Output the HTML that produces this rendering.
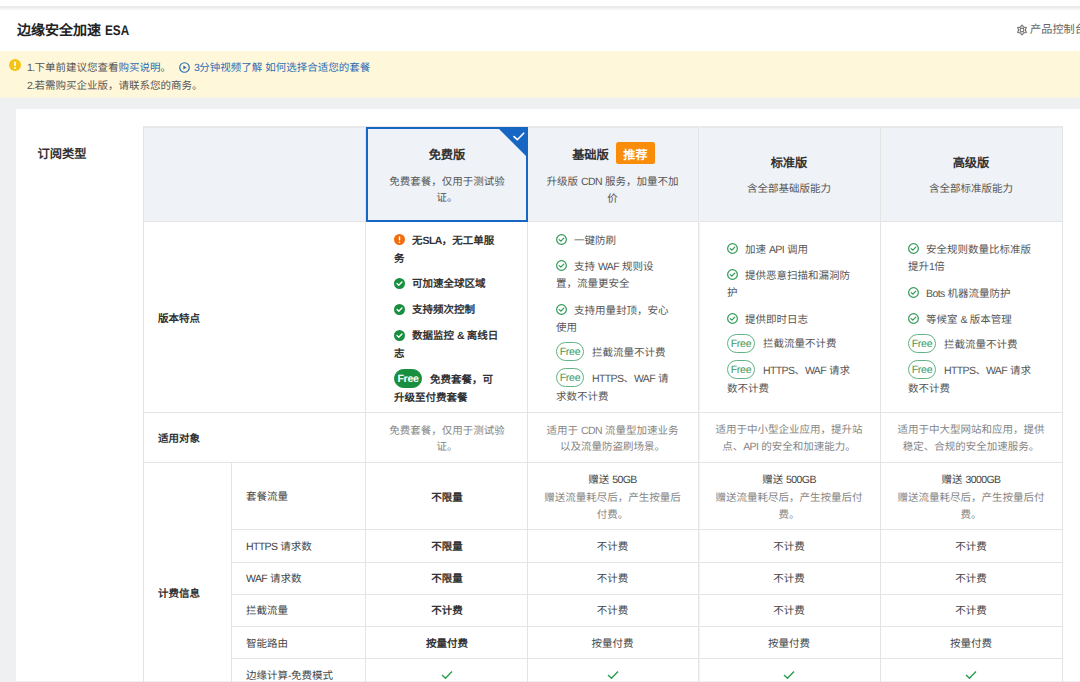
<!DOCTYPE html>
<html lang="zh-CN"><head><meta charset="utf-8"><style>
html,body{margin:0;padding:0;}
body{width:1080px;height:682px;overflow:hidden;position:relative;background:#fff;font-family:"Liberation Sans",sans-serif;text-rendering:geometricPrecision;}
.t{position:absolute;white-space:nowrap;}
.la{letter-spacing:-0.6px;}
.r{position:absolute;box-sizing:content-box;}
.free{box-sizing:border-box;width:28px;height:19px;border-radius:9.5px;font-size:10.6px;line-height:17px;padding-top:1.3px;text-align:center;letter-spacing:-0.3px;}
.ff{background:#178f3f;color:#fff;font-weight:700;border:1px solid #178f3f;}
.fo{background:#fff;color:#3f9a5e;border:1px solid #62b283;}
.badge{box-sizing:border-box;width:39px;height:21.5px;padding-top:4.6px;border-radius:2.5px;background:#fa8c0c;color:#fff;font-weight:700;font-size:12px;line-height:17px;text-align:center;letter-spacing:0.3px;}
</style></head><body>
<div class="r" style="left:0px;top:6px;width:1080px;height:5px;background:linear-gradient(#ebebeb,#ebebeb 35%,#f6f6f6 60%,#fdfdfd);"></div>
<div class="t" style="left:17.00px;top:19.50px;font-size:14px;line-height:20px;font-weight:700;color:#222;letter-spacing:0;">边缘安全加速 <span style="display:inline-block;transform:scaleX(0.84);transform-origin:0 50%;font-weight:600">ESA</span></div>
<svg class="t" style="left:1016px;top:24px" width="12" height="12" viewBox="0 0 12 12"><g fill="none" stroke="#707070" stroke-width="1.1" stroke-linejoin="round"><path d="M6.00 1.00 L7.68 3.10 L10.33 3.50 L9.35 6.00 L10.33 8.50 L7.68 8.90 L6.00 11.00 L4.33 8.90 L1.67 8.50 L2.65 6.00 L1.67 3.50 L4.32 3.10 Z"/><circle cx="6" cy="6" r="1.9"/></g></svg>
<div class="t" style="left:1030.00px;top:21.50px;font-size:11.2px;line-height:17px;font-weight:400;color:#666;letter-spacing:0px;">产品控制台</div>
<div class="r" style="left:0px;top:51px;width:1080px;height:47px;background:#fff7da;"></div>
<div class="r" style="left:0px;top:98px;width:1080px;height:584px;background:#eff0f1;"></div>
<div class="r" style="left:0px;top:97px;width:1080px;height:1px;background:#f7f4e6;"></div>
<div class="r" style="left:16px;top:109px;width:1064px;height:572px;background:#ffffff;"></div>
<svg class="t" style="left:9px;top:58.50px" width="12" height="12" viewBox="0 0 12 12"><circle cx="6" cy="6" r="6" fill="#f5c316"/><rect x="5.2" y="2.4" width="1.6" height="4.8" rx="0.8" fill="#fff"/><circle cx="6" cy="9" r="0.9" fill="#fff"/></svg>
<div class="t" style="left:27.00px;top:60.00px;font-size:10.5px;line-height:17px;font-weight:400;color:#555;letter-spacing:0px;"><span class="la" style="font-size:10.50px">1.</span>下单前建议您查看<span style="color:#2b6cb6">购买说明</span>。</div>
<svg class="t" style="left:179px;top:61.5px" width="11" height="11" viewBox="0 0 12 12"><circle cx="6" cy="6" r="5.2" fill="none" stroke="#2b6cb6" stroke-width="1.3"/><path d="M4.7 3.7 L8.4 6 L4.7 8.3 Z" fill="#2b6cb6"/></svg>
<div class="t" style="left:194.00px;top:60.00px;font-size:10.5px;line-height:17px;font-weight:400;color:#2b6cb6;letter-spacing:0px;"><span class="la" style="font-size:10.50px">3</span>分钟视频了解 如何选择合适您的套餐</div>
<div class="t" style="left:27.00px;top:77.50px;font-size:10.5px;line-height:17px;font-weight:400;color:#555;letter-spacing:0px;"><span class="la" style="font-size:10.50px">2.</span>若需购买企业版，请联系您的商务。</div>
<div class="t" style="left:37.50px;top:144.70px;font-size:12.25px;line-height:18px;font-weight:700;color:#333;letter-spacing:0px;">订阅类型</div>
<div class="r" style="left:143px;top:126px;width:920px;height:95px;background:#eff2f7;"></div>
<div class="r" style="left:143px;top:126px;width:920px;height:1px;background:#e9e9e9;"></div>
<div class="r" style="left:143px;top:127px;width:920px;height:1px;background:#e6e8ec;"></div>
<div class="r" style="left:143px;top:221px;width:920px;height:1px;background:#e4e4e4;"></div>
<div class="r" style="left:143px;top:412px;width:920px;height:1px;background:#e4e4e4;"></div>
<div class="r" style="left:143px;top:462px;width:920px;height:1px;background:#e4e4e4;"></div>
<div class="r" style="left:231px;top:529px;width:832px;height:1px;background:#e4e4e4;"></div>
<div class="r" style="left:231px;top:562px;width:832px;height:1px;background:#e4e4e4;"></div>
<div class="r" style="left:231px;top:594px;width:832px;height:1px;background:#e4e4e4;"></div>
<div class="r" style="left:231px;top:626px;width:832px;height:1px;background:#e4e4e4;"></div>
<div class="r" style="left:231px;top:658px;width:832px;height:1px;background:#e4e4e4;"></div>
<div class="r" style="left:143px;top:126px;width:1px;height:556px;background:#e4e4e4;"></div>
<div class="r" style="left:1062px;top:126px;width:1px;height:556px;background:#e4e4e4;"></div>
<div class="r" style="left:365px;top:126px;width:1px;height:556px;background:#e4e4e4;"></div>
<div class="r" style="left:527px;top:126px;width:1px;height:556px;background:#e4e4e4;"></div>
<div class="r" style="left:698px;top:126px;width:1px;height:556px;background:#e4e4e4;"></div>
<div class="r" style="left:699px;top:126px;width:1px;height:556px;background:#f4f4f4;"></div>
<div class="r" style="left:880px;top:126px;width:1px;height:556px;background:#e4e4e4;"></div>
<div class="r" style="left:231px;top:462px;width:1px;height:220px;background:#e4e4e4;"></div>
<div class="r" style="left:366px;top:127px;width:158px;height:91px;border:2px solid #1766c4;"></div>
<svg class="t" style="left:497px;top:127px" width="31" height="31" viewBox="0 0 31 31"><path d="M0 0 L31 0 L31 31 Z" fill="#1766c4"/><path d="M17 9.6 L20.3 12.7 L26.7 6.2" stroke="#fff" stroke-width="1.6" fill="none" stroke-linecap="round" stroke-linejoin="round"/></svg>
<div class="t" style="left:297.00px;top:147.00px;width:300px;text-align:center;font-size:12.25px;line-height:17px;font-weight:700;color:#333;letter-spacing:0px;">免费版</div>
<div class="t" style="left:297.00px;top:174.00px;width:300px;text-align:center;font-size:10.5px;line-height:17px;font-weight:400;color:#555;letter-spacing:0px;">免费套餐，仅用于测试验</div>
<div class="t" style="left:297.00px;top:189.50px;width:300px;text-align:center;font-size:10.5px;line-height:17px;font-weight:400;color:#555;letter-spacing:0px;">证。</div>
<div class="t" style="left:550.50px;top:147.00px;width:80px;text-align:center;font-size:12.25px;line-height:17px;font-weight:700;color:#333;letter-spacing:0px;">基础版</div>
<div class="t badge" style="left:616px;top:142.3px">推荐</div>
<div class="t" style="left:462.50px;top:173.80px;width:300px;text-align:center;font-size:10.5px;line-height:17px;font-weight:400;color:#555;letter-spacing:0px;">升级版 <span class="la" style="font-size:10.50px">CDN</span> 服务，加量不加</div>
<div class="t" style="left:462.50px;top:190.50px;width:300px;text-align:center;font-size:10.5px;line-height:17px;font-weight:400;color:#555;letter-spacing:0px;">价</div>
<div class="t" style="left:639.00px;top:155.30px;width:300px;text-align:center;font-size:12.25px;line-height:17px;font-weight:700;color:#333;letter-spacing:0px;">标准版</div>
<div class="t" style="left:639.00px;top:181.10px;width:300px;text-align:center;font-size:10.5px;line-height:17px;font-weight:400;color:#555;letter-spacing:0px;">含全部基础版能力</div>
<div class="t" style="left:821.00px;top:155.00px;width:300px;text-align:center;font-size:12.25px;line-height:17px;font-weight:700;color:#333;letter-spacing:0px;">高级版</div>
<div class="t" style="left:821.00px;top:181.10px;width:300px;text-align:center;font-size:10.5px;line-height:17px;font-weight:400;color:#555;letter-spacing:0px;">含全部标准版能力</div>
<div class="t" style="left:158.00px;top:310.50px;font-size:10.5px;line-height:17px;font-weight:700;color:#333;letter-spacing:0px;">版本特点</div>
<div class="t" style="left:158.00px;top:430.50px;font-size:10.5px;line-height:17px;font-weight:700;color:#333;letter-spacing:0px;">适用对象</div>
<div class="t" style="left:158.00px;top:585.50px;font-size:10.5px;line-height:17px;font-weight:700;color:#333;letter-spacing:0px;">计费信息</div>
<div class="t" style="left:246.00px;top:488.50px;font-size:10.5px;line-height:17px;font-weight:400;color:#444;letter-spacing:0px;">套餐流量</div>
<div class="t" style="left:246.00px;top:538.50px;font-size:10.5px;line-height:17px;font-weight:400;color:#444;letter-spacing:0px;"><span class="la" style="font-size:10.50px">HTTPS</span> 请求数</div>
<div class="t" style="left:246.00px;top:570.50px;font-size:10.5px;line-height:17px;font-weight:400;color:#444;letter-spacing:0px;"><span class="la" style="font-size:10.50px">WAF</span> 请求数</div>
<div class="t" style="left:246.00px;top:602.50px;font-size:10.5px;line-height:17px;font-weight:400;color:#444;letter-spacing:0px;">拦截流量</div>
<div class="t" style="left:246.00px;top:635.50px;font-size:10.5px;line-height:17px;font-weight:400;color:#444;letter-spacing:0px;">智能路由</div>
<div class="t" style="left:246.00px;top:667.50px;font-size:10.5px;line-height:17px;font-weight:400;color:#444;letter-spacing:0px;">边缘计算<span class="la" style="font-size:10.50px">-</span>免费模式</div>
<svg class="t" style="left:394px;top:233.80px" width="11" height="11" viewBox="0 0 12 12"><circle cx="6" cy="6" r="6" fill="#f26d0f"/><rect x="5.2" y="2.4" width="1.6" height="4.8" rx="0.8" fill="#fff"/><circle cx="6" cy="9" r="0.9" fill="#fff"/></svg>
<div class="t" style="left:412.00px;top:233.00px;font-size:10.5px;line-height:17px;font-weight:700;color:#333;letter-spacing:0px;">无<span class="la" style="font-size:10.50px">SLA</span>，无工单服</div>
<div class="t" style="left:394.00px;top:251.00px;font-size:10.5px;line-height:17px;font-weight:700;color:#333;letter-spacing:0px;">务</div>
<svg class="t" style="left:394px;top:278.00px" width="11" height="11" viewBox="0 0 12 12"><circle cx="6" cy="6" r="6" fill="#178f3f"/><path d="M3.3 6.1 L5.2 7.9 L8.7 4.3" stroke="#fff" stroke-width="1.5" fill="none" stroke-linecap="round" stroke-linejoin="round"/></svg>
<div class="t" style="left:412.00px;top:276.00px;font-size:10.5px;line-height:17px;font-weight:700;color:#333;letter-spacing:0px;">可加速全球区域</div>
<svg class="t" style="left:394px;top:303.50px" width="11" height="11" viewBox="0 0 12 12"><circle cx="6" cy="6" r="6" fill="#178f3f"/><path d="M3.3 6.1 L5.2 7.9 L8.7 4.3" stroke="#fff" stroke-width="1.5" fill="none" stroke-linecap="round" stroke-linejoin="round"/></svg>
<div class="t" style="left:412.00px;top:301.50px;font-size:10.5px;line-height:17px;font-weight:700;color:#333;letter-spacing:0px;">支持频次控制</div>
<svg class="t" style="left:394px;top:330.00px" width="11" height="11" viewBox="0 0 12 12"><circle cx="6" cy="6" r="6" fill="#178f3f"/><path d="M3.3 6.1 L5.2 7.9 L8.7 4.3" stroke="#fff" stroke-width="1.5" fill="none" stroke-linecap="round" stroke-linejoin="round"/></svg>
<div class="t" style="left:412.00px;top:328.00px;font-size:10.5px;line-height:17px;font-weight:700;color:#333;letter-spacing:0px;">数据监控 <span class="la" style="font-size:10.50px">&amp;</span> 离线日</div>
<div class="t" style="left:394.00px;top:346.30px;font-size:10.5px;line-height:17px;font-weight:700;color:#333;letter-spacing:0px;">志</div>
<div class="t free ff" style="left:394px;top:369.00px">Free</div>
<div class="t" style="left:430.00px;top:372.00px;font-size:10.5px;line-height:17px;font-weight:700;color:#333;letter-spacing:0px;">免费套餐，可</div>
<div class="t" style="left:394.00px;top:390.00px;font-size:10.5px;line-height:17px;font-weight:700;color:#333;letter-spacing:0px;">升级至付费套餐</div>
<svg class="t" style="left:556px;top:234.00px" width="11" height="11" viewBox="0 0 12 12"><circle cx="6" cy="6" r="5.3" fill="none" stroke="#2e9a56" stroke-width="1.3"/><path d="M3.5 6.1 L5.3 7.8 L8.5 4.5" stroke="#2e9a56" stroke-width="1.3" fill="none" stroke-linecap="round" stroke-linejoin="round"/></svg>
<div class="t" style="left:574.00px;top:233.20px;font-size:10.5px;line-height:17px;font-weight:400;color:#555;letter-spacing:0px;">一键防刷</div>
<svg class="t" style="left:556px;top:260.00px" width="11" height="11" viewBox="0 0 12 12"><circle cx="6" cy="6" r="5.3" fill="none" stroke="#2e9a56" stroke-width="1.3"/><path d="M3.5 6.1 L5.3 7.8 L8.5 4.5" stroke="#2e9a56" stroke-width="1.3" fill="none" stroke-linecap="round" stroke-linejoin="round"/></svg>
<div class="t" style="left:574.00px;top:258.70px;font-size:10.5px;line-height:17px;font-weight:400;color:#555;letter-spacing:0px;">支持 <span class="la" style="font-size:10.50px">WAF</span> 规则设</div>
<div class="t" style="left:556.00px;top:276.20px;font-size:10.5px;line-height:17px;font-weight:400;color:#555;letter-spacing:0px;">置，流量更安全</div>
<svg class="t" style="left:556px;top:304.00px" width="11" height="11" viewBox="0 0 12 12"><circle cx="6" cy="6" r="5.3" fill="none" stroke="#2e9a56" stroke-width="1.3"/><path d="M3.5 6.1 L5.3 7.8 L8.5 4.5" stroke="#2e9a56" stroke-width="1.3" fill="none" stroke-linecap="round" stroke-linejoin="round"/></svg>
<div class="t" style="left:574.00px;top:302.70px;font-size:10.5px;line-height:17px;font-weight:400;color:#555;letter-spacing:0px;">支持用量封顶，安心</div>
<div class="t" style="left:556.00px;top:320.20px;font-size:10.5px;line-height:17px;font-weight:400;color:#555;letter-spacing:0px;">使用</div>
<div class="t free fo" style="left:556px;top:342.00px">Free</div>
<div class="t" style="left:592.00px;top:344.70px;font-size:10.5px;line-height:17px;font-weight:400;color:#555;letter-spacing:0px;">拦截流量不计费</div>
<div class="t free fo" style="left:556px;top:368.00px">Free</div>
<div class="t" style="left:592.00px;top:370.70px;font-size:10.5px;line-height:17px;font-weight:400;color:#555;letter-spacing:0px;"><span class="la" style="font-size:10.50px">HTTPS</span>、<span class="la" style="font-size:10.50px">WAF</span> 请</div>
<div class="t" style="left:556.00px;top:389.20px;font-size:10.5px;line-height:17px;font-weight:400;color:#555;letter-spacing:0px;">求数不计费</div>
<svg class="t" style="left:727px;top:243.00px" width="11" height="11" viewBox="0 0 12 12"><circle cx="6" cy="6" r="5.3" fill="none" stroke="#2e9a56" stroke-width="1.3"/><path d="M3.5 6.1 L5.3 7.8 L8.5 4.5" stroke="#2e9a56" stroke-width="1.3" fill="none" stroke-linecap="round" stroke-linejoin="round"/></svg>
<div class="t" style="left:745.00px;top:241.70px;font-size:10.5px;line-height:17px;font-weight:400;color:#555;letter-spacing:0px;">加速 <span class="la" style="font-size:10.50px">API</span> 调用</div>
<svg class="t" style="left:727px;top:269.00px" width="11" height="11" viewBox="0 0 12 12"><circle cx="6" cy="6" r="5.3" fill="none" stroke="#2e9a56" stroke-width="1.3"/><path d="M3.5 6.1 L5.3 7.8 L8.5 4.5" stroke="#2e9a56" stroke-width="1.3" fill="none" stroke-linecap="round" stroke-linejoin="round"/></svg>
<div class="t" style="left:745.00px;top:267.70px;font-size:10.5px;line-height:17px;font-weight:400;color:#555;letter-spacing:0px;">提供恶意扫描和漏洞防</div>
<div class="t" style="left:727.00px;top:285.20px;font-size:10.5px;line-height:17px;font-weight:400;color:#555;letter-spacing:0px;">护</div>
<svg class="t" style="left:727px;top:313.00px" width="11" height="11" viewBox="0 0 12 12"><circle cx="6" cy="6" r="5.3" fill="none" stroke="#2e9a56" stroke-width="1.3"/><path d="M3.5 6.1 L5.3 7.8 L8.5 4.5" stroke="#2e9a56" stroke-width="1.3" fill="none" stroke-linecap="round" stroke-linejoin="round"/></svg>
<div class="t" style="left:745.00px;top:311.70px;font-size:10.5px;line-height:17px;font-weight:400;color:#555;letter-spacing:0px;">提供即时日志</div>
<div class="t free fo" style="left:727px;top:333.50px">Free</div>
<div class="t" style="left:763.00px;top:336.20px;font-size:10.5px;line-height:17px;font-weight:400;color:#555;letter-spacing:0px;">拦截流量不计费</div>
<div class="t free fo" style="left:727px;top:360.00px">Free</div>
<div class="t" style="left:763.00px;top:362.70px;font-size:10.5px;line-height:17px;font-weight:400;color:#555;letter-spacing:0px;"><span class="la" style="font-size:10.50px">HTTPS</span>、<span class="la" style="font-size:10.50px">WAF</span> 请求</div>
<div class="t" style="left:727.00px;top:381.20px;font-size:10.5px;line-height:17px;font-weight:400;color:#555;letter-spacing:0px;">数不计费</div>
<svg class="t" style="left:908px;top:243.00px" width="11" height="11" viewBox="0 0 12 12"><circle cx="6" cy="6" r="5.3" fill="none" stroke="#2e9a56" stroke-width="1.3"/><path d="M3.5 6.1 L5.3 7.8 L8.5 4.5" stroke="#2e9a56" stroke-width="1.3" fill="none" stroke-linecap="round" stroke-linejoin="round"/></svg>
<div class="t" style="left:926.00px;top:241.70px;font-size:10.5px;line-height:17px;font-weight:400;color:#555;letter-spacing:0px;">安全规则数量比标准版</div>
<div class="t" style="left:908.00px;top:259.20px;font-size:10.5px;line-height:17px;font-weight:400;color:#555;letter-spacing:0px;">提升<span class="la" style="font-size:10.50px">1</span>倍</div>
<svg class="t" style="left:908px;top:287.00px" width="11" height="11" viewBox="0 0 12 12"><circle cx="6" cy="6" r="5.3" fill="none" stroke="#2e9a56" stroke-width="1.3"/><path d="M3.5 6.1 L5.3 7.8 L8.5 4.5" stroke="#2e9a56" stroke-width="1.3" fill="none" stroke-linecap="round" stroke-linejoin="round"/></svg>
<div class="t" style="left:926.00px;top:285.70px;font-size:10.5px;line-height:17px;font-weight:400;color:#555;letter-spacing:0px;"><span class="la" style="font-size:10.50px">Bots</span> 机器流量防护</div>
<svg class="t" style="left:908px;top:313.00px" width="11" height="11" viewBox="0 0 12 12"><circle cx="6" cy="6" r="5.3" fill="none" stroke="#2e9a56" stroke-width="1.3"/><path d="M3.5 6.1 L5.3 7.8 L8.5 4.5" stroke="#2e9a56" stroke-width="1.3" fill="none" stroke-linecap="round" stroke-linejoin="round"/></svg>
<div class="t" style="left:926.00px;top:311.70px;font-size:10.5px;line-height:17px;font-weight:400;color:#555;letter-spacing:0px;">等候室 <span class="la" style="font-size:10.50px">&amp;</span> 版本管理</div>
<div class="t free fo" style="left:908px;top:334.00px">Free</div>
<div class="t" style="left:944.00px;top:336.70px;font-size:10.5px;line-height:17px;font-weight:400;color:#555;letter-spacing:0px;">拦截流量不计费</div>
<div class="t free fo" style="left:908px;top:360.00px">Free</div>
<div class="t" style="left:944.00px;top:362.70px;font-size:10.5px;line-height:17px;font-weight:400;color:#555;letter-spacing:0px;"><span class="la" style="font-size:10.50px">HTTPS</span>、<span class="la" style="font-size:10.50px">WAF</span> 请求</div>
<div class="t" style="left:908.00px;top:381.20px;font-size:10.5px;line-height:17px;font-weight:400;color:#555;letter-spacing:0px;">数不计费</div>
<div class="t" style="left:297.00px;top:422.50px;width:300px;text-align:center;font-size:10.5px;line-height:17px;font-weight:400;color:#858585;letter-spacing:0px;">免费套餐，仅用于测试验</div>
<div class="t" style="left:297.00px;top:439.10px;width:300px;text-align:center;font-size:10.5px;line-height:17px;font-weight:400;color:#858585;letter-spacing:0px;">证。</div>
<div class="t" style="left:462.50px;top:422.50px;width:300px;text-align:center;font-size:10.5px;line-height:17px;font-weight:400;color:#858585;letter-spacing:0px;">适用于 <span class="la" style="font-size:10.50px">CDN</span> 流量型加速业务</div>
<div class="t" style="left:462.50px;top:439.10px;width:300px;text-align:center;font-size:10.5px;line-height:17px;font-weight:400;color:#858585;letter-spacing:0px;">以及流量防盗刷场景。</div>
<div class="t" style="left:639.00px;top:421.50px;width:300px;text-align:center;font-size:10.5px;line-height:17px;font-weight:400;color:#858585;letter-spacing:0px;">适用于中小型企业应用，提升站</div>
<div class="t" style="left:639.00px;top:439.10px;width:300px;text-align:center;font-size:10.5px;line-height:17px;font-weight:400;color:#858585;letter-spacing:0px;">点、<span class="la" style="font-size:10.50px">API</span> 的安全和加速能力。</div>
<div class="t" style="left:821.00px;top:421.50px;width:300px;text-align:center;font-size:10.5px;line-height:17px;font-weight:400;color:#858585;letter-spacing:0px;">适用于中大型网站和应用，提供</div>
<div class="t" style="left:821.00px;top:439.10px;width:300px;text-align:center;font-size:10.5px;line-height:17px;font-weight:400;color:#858585;letter-spacing:0px;">稳定、合规的安全加速服务。</div>
<div class="t" style="left:297.00px;top:489.50px;width:300px;text-align:center;font-size:10.5px;line-height:17px;font-weight:700;color:#333;letter-spacing:0px;">不限量</div>
<div class="t" style="left:462.50px;top:471.90px;width:300px;text-align:center;font-size:10.5px;line-height:17px;font-weight:400;color:#444;letter-spacing:0px;">赠送 <span class="la" style="font-size:10.50px">50GB</span></div>
<div class="t" style="left:462.50px;top:489.80px;width:300px;text-align:center;font-size:10.5px;line-height:17px;font-weight:400;color:#858585;letter-spacing:0px;">赠送流量耗尽后，产生按量后</div>
<div class="t" style="left:462.50px;top:506.70px;width:300px;text-align:center;font-size:10.5px;line-height:17px;font-weight:400;color:#858585;letter-spacing:0px;">付费。</div>
<div class="t" style="left:639.00px;top:471.90px;width:300px;text-align:center;font-size:10.5px;line-height:17px;font-weight:400;color:#444;letter-spacing:0px;">赠送 <span class="la" style="font-size:10.50px">500GB</span></div>
<div class="t" style="left:639.00px;top:489.80px;width:300px;text-align:center;font-size:10.5px;line-height:17px;font-weight:400;color:#858585;letter-spacing:0px;">赠送流量耗尽后，产生按量后付</div>
<div class="t" style="left:639.00px;top:506.70px;width:300px;text-align:center;font-size:10.5px;line-height:17px;font-weight:400;color:#858585;letter-spacing:0px;">费。</div>
<div class="t" style="left:821.00px;top:471.90px;width:300px;text-align:center;font-size:10.5px;line-height:17px;font-weight:400;color:#444;letter-spacing:0px;">赠送 <span class="la" style="font-size:10.50px">3000GB</span></div>
<div class="t" style="left:821.00px;top:489.80px;width:300px;text-align:center;font-size:10.5px;line-height:17px;font-weight:400;color:#858585;letter-spacing:0px;">赠送流量耗尽后，产生按量后付</div>
<div class="t" style="left:821.00px;top:506.70px;width:300px;text-align:center;font-size:10.5px;line-height:17px;font-weight:400;color:#858585;letter-spacing:0px;">费。</div>
<div class="t" style="left:297.00px;top:538.50px;width:300px;text-align:center;font-size:10.5px;line-height:17px;font-weight:700;color:#333;letter-spacing:0px;">不限量</div>
<div class="t" style="left:462.50px;top:538.50px;width:300px;text-align:center;font-size:10.5px;line-height:17px;font-weight:400;color:#444;letter-spacing:0px;">不计费</div>
<div class="t" style="left:639.00px;top:538.50px;width:300px;text-align:center;font-size:10.5px;line-height:17px;font-weight:400;color:#444;letter-spacing:0px;">不计费</div>
<div class="t" style="left:821.00px;top:538.50px;width:300px;text-align:center;font-size:10.5px;line-height:17px;font-weight:400;color:#444;letter-spacing:0px;">不计费</div>
<div class="t" style="left:297.00px;top:570.50px;width:300px;text-align:center;font-size:10.5px;line-height:17px;font-weight:700;color:#333;letter-spacing:0px;">不限量</div>
<div class="t" style="left:462.50px;top:570.50px;width:300px;text-align:center;font-size:10.5px;line-height:17px;font-weight:400;color:#444;letter-spacing:0px;">不计费</div>
<div class="t" style="left:639.00px;top:570.50px;width:300px;text-align:center;font-size:10.5px;line-height:17px;font-weight:400;color:#444;letter-spacing:0px;">不计费</div>
<div class="t" style="left:821.00px;top:570.50px;width:300px;text-align:center;font-size:10.5px;line-height:17px;font-weight:400;color:#444;letter-spacing:0px;">不计费</div>
<div class="t" style="left:297.00px;top:602.50px;width:300px;text-align:center;font-size:10.5px;line-height:17px;font-weight:700;color:#333;letter-spacing:0px;">不计费</div>
<div class="t" style="left:462.50px;top:602.50px;width:300px;text-align:center;font-size:10.5px;line-height:17px;font-weight:400;color:#444;letter-spacing:0px;">不计费</div>
<div class="t" style="left:639.00px;top:602.50px;width:300px;text-align:center;font-size:10.5px;line-height:17px;font-weight:400;color:#444;letter-spacing:0px;">不计费</div>
<div class="t" style="left:821.00px;top:602.50px;width:300px;text-align:center;font-size:10.5px;line-height:17px;font-weight:400;color:#444;letter-spacing:0px;">不计费</div>
<div class="t" style="left:297.00px;top:635.50px;width:300px;text-align:center;font-size:10.5px;line-height:17px;font-weight:700;color:#333;letter-spacing:0px;">按量付费</div>
<div class="t" style="left:462.50px;top:635.50px;width:300px;text-align:center;font-size:10.5px;line-height:17px;font-weight:400;color:#444;letter-spacing:0px;">按量付费</div>
<div class="t" style="left:639.00px;top:635.50px;width:300px;text-align:center;font-size:10.5px;line-height:17px;font-weight:400;color:#444;letter-spacing:0px;">按量付费</div>
<div class="t" style="left:821.00px;top:635.50px;width:300px;text-align:center;font-size:10.5px;line-height:17px;font-weight:400;color:#444;letter-spacing:0px;">按量付费</div>
<svg class="t" style="left:441px;top:670px" width="12" height="10" viewBox="0 0 12 10"><path d="M1 5 L4.5 8.3 L11 1.5" stroke="#2a9d4f" stroke-width="1.4" fill="none"/></svg>
<svg class="t" style="left:606.5px;top:670px" width="12" height="10" viewBox="0 0 12 10"><path d="M1 5 L4.5 8.3 L11 1.5" stroke="#2a9d4f" stroke-width="1.4" fill="none"/></svg>
<svg class="t" style="left:783px;top:670px" width="12" height="10" viewBox="0 0 12 10"><path d="M1 5 L4.5 8.3 L11 1.5" stroke="#2a9d4f" stroke-width="1.4" fill="none"/></svg>
<svg class="t" style="left:965px;top:670px" width="12" height="10" viewBox="0 0 12 10"><path d="M1 5 L4.5 8.3 L11 1.5" stroke="#2a9d4f" stroke-width="1.4" fill="none"/></svg>
</body></html>
